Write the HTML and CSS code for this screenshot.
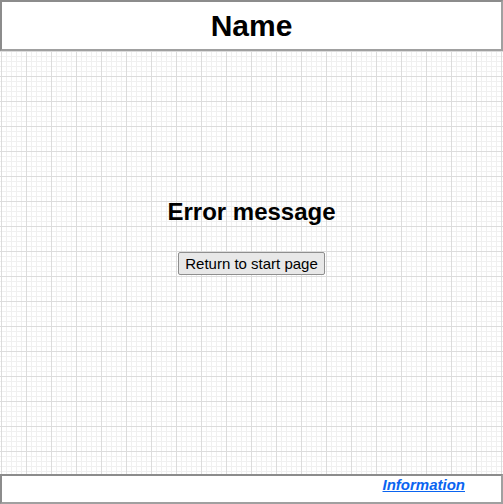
FILE: index.html
```html
<!DOCTYPE html>
<html>
<head>
<meta charset="utf-8">
<link rel="stylesheet" href="styles.css">
</head>
<body>
<div class="page">
  <header class="header"><h1 class="title">Name</h1></header>
  <main class="main">
    <h2 class="error">Error message</h2>
    <button class="btn" type="button">Return to start page</button>
  </main>
  <footer class="footer"><a class="info" href="#">Information</a></footer>
</div>
</body>
</html>
```
FILE: styles.css
```css
html, body {
  margin: 0;
  padding: 0;
}
body {
  font-family: "Liberation Sans", Arial, sans-serif;
  width: 503px;
  height: 504px;
  background-color: #fff;
  background-image:
    linear-gradient(to right, #dcdcdc 1px, transparent 1px),
    linear-gradient(to bottom, #dcdcdc 1px, transparent 1px),
    linear-gradient(to right, #f0f0f0 1px, transparent 1px),
    linear-gradient(to bottom, #f0f0f0 1px, transparent 1px);
  background-size: 25px 25px, 25px 25px, 5px 5px, 5px 5px;
  background-position: 1px 1px;
}
.page {
  display: flex;
  flex-direction: column;
  height: 504px;
}
.header {
  height: 47px;
  border: 2px solid #8c8c8c;
  border-right-color: #a0a0a0;
  border-bottom-color: #a0a0a0;
  background: #fff;
  display: flex;
  align-items: center;
  justify-content: center;
}
.title {
  margin: 0;
  font-size: 30px;
  font-weight: bold;
  color: #000;
}
.main {
  flex: 1;
  display: flex;
  flex-direction: column;
  align-items: center;
  padding-top: 147px;
  box-sizing: border-box;
}
.error {
  margin: 0 0 26px;
  font-size: 24px;
  font-weight: bold;
  line-height: 28px;
}
.btn {
  font-family: "Liberation Sans", Arial, sans-serif;
  font-size: 15px;
  line-height: 17px;
  padding: 2px 6px;
  background: #e8e8e8;
  border: 1px solid #8f8f8f;
  border-radius: 2px;
  color: #000;
}
.footer {
  height: 26px;
  border: 2px solid #8c8c8c;
  border-right-color: #a0a0a0;
  border-bottom-color: #a0a0a0;
  background: #fff;
  display: flex;
  align-items: flex-start;
  justify-content: flex-end;
  padding-right: 36px;
}
.info {
  margin-top: 0;
  font-size: 15px;
  line-height: 17px;
  font-weight: bold;
  font-style: italic;
  color: #0a64f0;
  text-decoration: underline;
}
```
